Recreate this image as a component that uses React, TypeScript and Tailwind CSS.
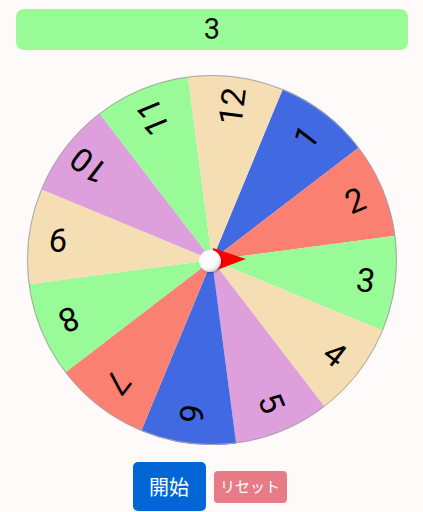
import React from "react";

const colors: Record<number, string> = {
  1: "#4169E1",
  2: "#FA8072",
  3: "#98FB98",
  4: "#F5DEB3",
  5: "#DDA0DD",
  6: "#4169E1",
  7: "#FA8072",
  8: "#98FB98",
  9: "#F5DEB3",
  10: "#DDA0DD",
  11: "#98FB98",
  12: "#F5DEB3",
};

const C = 186;
const R = 185;
const TR = 155;

function pt(r: number, deg: number) {
  const a = (deg * Math.PI) / 180;
  return [C + r * Math.cos(a), C + r * Math.sin(a)];
}

function Wheel() {
  const segs = [];
  for (let i = 1; i <= 12; i++) {
    const th = 7.5 + (i - 3) * 30;
    const [x1, y1] = pt(R, th - 15);
    const [x2, y2] = pt(R, th + 15);
    const [tx, ty] = pt(TR, th);
    segs.push(
      <g key={i}>
        <path
          d={`M ${C} ${C} L ${x1} ${y1} A ${R} ${R} 0 0 1 ${x2} ${y2} Z`}
          fill={colors[i]}
        />
        <text
          x={tx}
          y={ty}
          transform={`rotate(${th} ${tx} ${ty})`}
          textAnchor="middle"
          dominantBaseline="central"
          fontSize="33"
          fontFamily="Roboto, 'Liberation Sans', sans-serif"
          fill="#000"
        >
          {i}
        </text>
      </g>
    );
  }
  return (
    <svg width="372" height="372" viewBox="0 0 372 372">
      <defs>
        <radialGradient id="knob" cx="0.4" cy="0.38" r="0.65">
          <stop offset="0" stopColor="#ffffff" />
          <stop offset="0.7" stopColor="#fafafa" />
          <stop offset="1" stopColor="#cfcfcf" />
        </radialGradient>
        <filter id="sh" x="-50%" y="-50%" width="200%" height="200%">
          <feDropShadow dx="1" dy="1" stdDeviation="1" floodColor="#000" floodOpacity="0.3" />
        </filter>
      </defs>
      {segs}
      <circle cx={C} cy={C} r={R - 0.5} fill="none" stroke="#a8a8a8" strokeWidth="1" />
      <polygon points="187,174 220,185 188,197" fill="#ff0000" />
      <circle cx={184} cy={187} r={11} fill="url(#knob)" filter="url(#sh)" />
    </svg>
  );
}

export default function App() {
  return (
    <div className="w-[423px] h-[512px] bg-[#fffafa] overflow-hidden flex flex-col items-center" style={{ fontFamily: "Roboto, 'Noto Sans CJK JP', sans-serif" }}>
      <div className="mt-[9px] w-[392px] h-[41px] ml-[1px] rounded-[8px] bg-[#98FB98] flex items-center justify-center text-[29px] text-[#111] leading-none">
        3
      </div>
      <div className="mt-[24px] ml-[1px]">
        <Wheel />
      </div>
      <div className="mt-[16px] flex items-center gap-[8px] -ml-[4px]">
        <button className="w-[73px] h-[49px] rounded-[5px] bg-[#0366d6] text-white text-[20px] flex items-center justify-center" style={{ fontFamily: "'Noto Sans CJK JP', sans-serif" }}>
          開始
        </button>
        <button className="w-[73px] h-[32px] rounded-[4px] bg-[#e87b86] text-white text-[15px] flex items-center justify-center" style={{ fontFamily: "'Noto Sans CJK JP', sans-serif" }}>
          リセット
        </button>
      </div>
    </div>
  );
}
